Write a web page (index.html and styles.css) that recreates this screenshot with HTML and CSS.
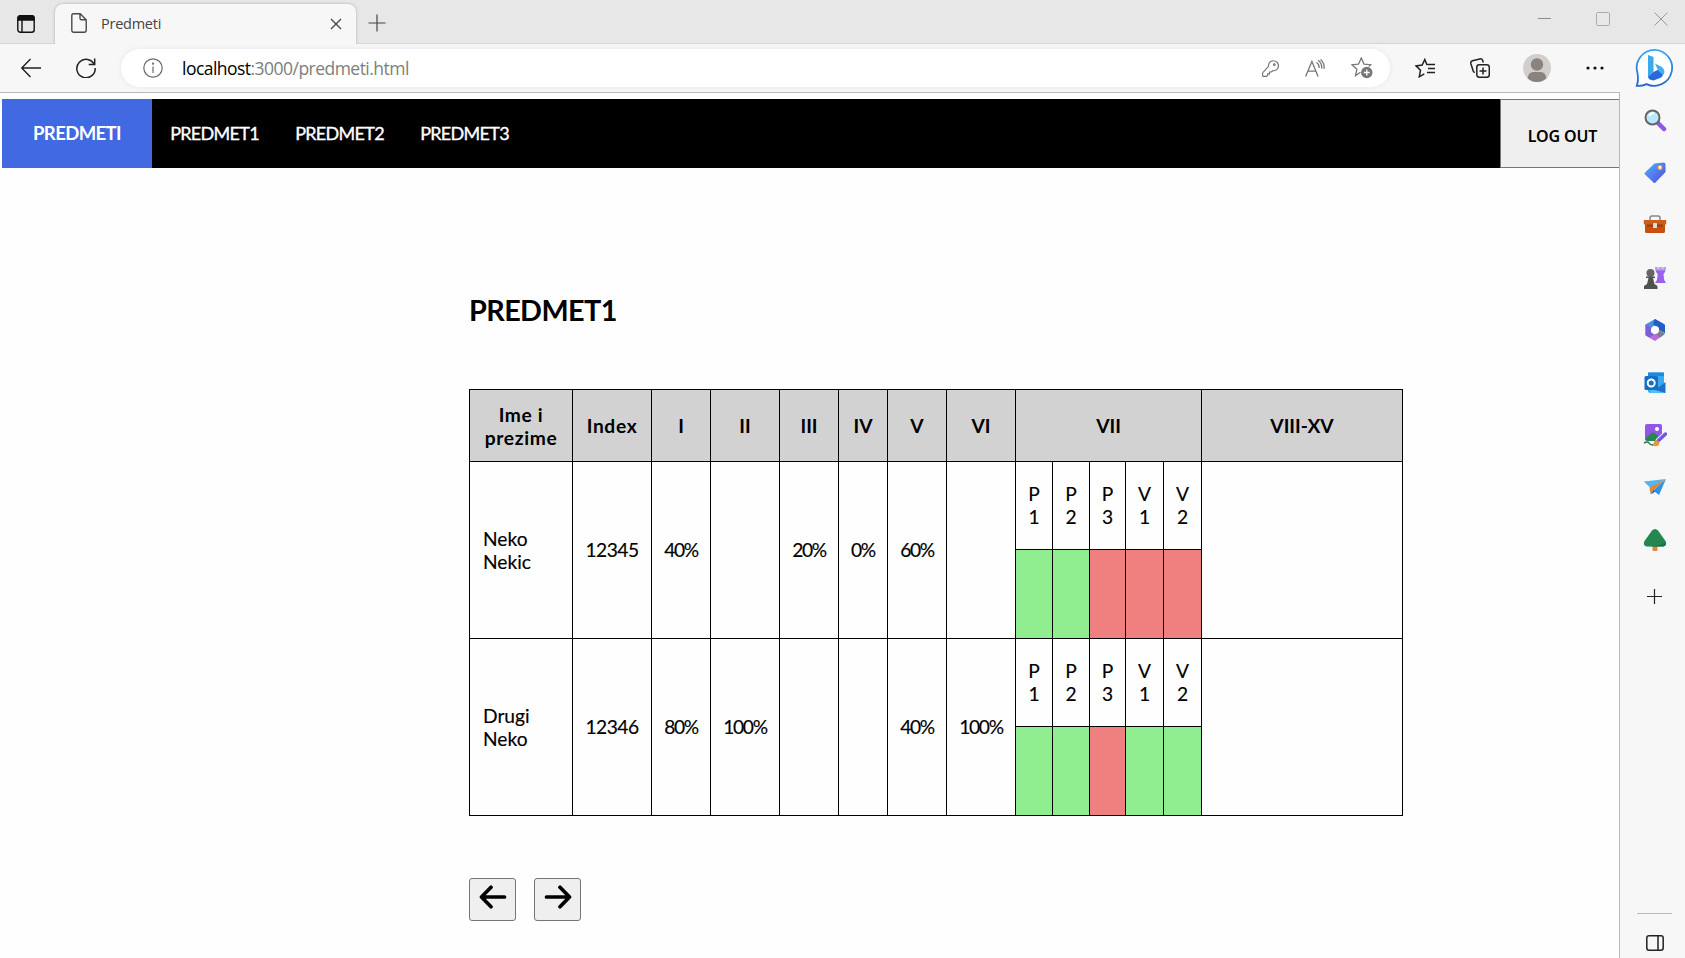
FILE: index.html
```html
<!DOCTYPE html>
<html lang="bs">
<head>
<meta charset="utf-8">
<title>Predmeti</title>
<link rel="stylesheet" href="styles.css">
</head>
<body>
<header class="tabstrip">
  <svg class="workspaces" width="18" height="18" viewBox="0 0 18 18" fill="none" stroke="#111" stroke-width="1.4"><rect x=".8" y=".8" width="16.4" height="16.4" rx="2.5"/><path d="M1 3.2Q1 1 3.2 1h11.6Q17 1 17 3.2V5H1z" fill="#111"/><path d="M5 5v12"/></svg>
  <div class="tab">
    <svg width="16" height="20" viewBox="0 0 16 20" fill="none" stroke="#4a4a4a" stroke-width="1.4"><path d="M2.5.8h6.7l6 6v10.5q0 1.9-1.9 1.9H2.7Q.8 19.200.8 17.300V2.700Q.8.8 2.500.8zM9 .8v4.400q0 1.600 1.600 1.600H15"/></svg>
    <span class="tab-title">Predmeti</span>
    <svg class="tab-close" width="12" height="12" viewBox="0 0 12 12" stroke="#444" stroke-width="1.3"><path d="M1 1l10 10M11 1L1 11"/></svg>
  </div>
  <svg class="new-tab" width="18" height="18" viewBox="0 0 18 18" stroke="#444" stroke-width="1.2"><path d="M9 .5v17M.5 9h17"/></svg>
  <div class="window-buttons">
    <svg width="14" height="14" viewBox="0 0 14 14"><path d="M0 6.500h13" stroke="#958b84"/></svg>
    <svg width="14" height="14" viewBox="0 0 14 14"><rect x=".5" y=".5" width="13" height="13" rx="1" fill="none" stroke="#aaa"/></svg>
    <svg width="14" height="14" viewBox="0 0 14 14"><path d="M.5.5l13 13M13.500.5l-13 13" stroke="#999"/></svg>
  </div>
</header>
<div class="window">
  <div class="left">
    <div class="toolbar">
      <svg class="back" width="20" height="20" viewBox="0 0 20 20" fill="none" stroke="#222" stroke-width="1.4"><path d="M20 10H1M9.500 1L.8 10l8.700 9"/></svg>
      <svg class="reload" width="20" height="20" viewBox="0 0 20 20" fill="none" stroke="#222" stroke-width="1.5"><path d="M18.500 7A9.200 9.200 0 1 0 19.200 10M18.700.5V6.500h-6"/></svg>
      <div class="address">
        <svg width="20" height="20" viewBox="0 0 20 20" fill="none" stroke="#6b6b6b" stroke-width="1.2"><circle cx="10" cy="10" r="9.200"/><path d="M10 8.500V15" /><circle cx="10" cy="5.700" r=".5" fill="#6b6b6b"/></svg>
        <span class="url"><b>localhost</b>:3000/predmeti.html</span>
        <div class="address-icons">
          <svg width="17" height="17" viewBox="0 0 17 17" fill="none" stroke="#777" stroke-width="1.200"><path d="M6.500 6.300A5 5 0 1 1 10.800 10.700L9.300 12H7.500v1.800H5.700v1.500L4.500 16.400H1.200Q.6 16.400.6 15.500V13.300Q.6 12.700 1 12.300z"/><circle cx="12.300" cy="4.700" r=".8"/></svg>
          <svg width="20" height="18" viewBox="0 0 20 18" fill="none" stroke="#777" stroke-width="1.300"><path d="M.6 17.500L6.900 2.500l6.200 15M3 12.200h7.900M11.500 3.500q2.800 1.800 2.600 5.500M13 1.300q4.300 2.900 3.600 8.300M15.500.5q4.300 3.700 3.500 9.300"/></svg>
          <svg width="22" height="22" viewBox="0 0 22 22" fill="none" stroke="#777" stroke-width="1.300"><path d="M9.500 15.200L4.500 18.500 5.900 12.200 1 7.700l6.500-.6L10.300 1l2.700 6.100 6.700.6-1.900 1.900"/><circle cx="15.800" cy="15.500" r="5.700" fill="#777" stroke="none"/><path d="M15.800 12.500v6M12.800 15.500h6" stroke="#fff"/></svg>
        </div>
      </div>
      <div class="tools">
        <svg width="20" height="20" viewBox="0 0 20 20" fill="none" stroke="#222" stroke-width="1.500"><path d="M12 7L9.800 1.500 7.200 7.100 1 7.900l4.500 4.300L4.300 18.800l5-2.900M12.500 6.500h7.500M13 10.500h7M12 14.500h8"/></svg>
        <svg width="20" height="20" viewBox="0 0 20 20" fill="none" stroke="#222" stroke-width="1.500"><rect x="6.800" y="6.800" width="12.500" height="12.500" rx="2.500"/><path d="M13 9.500v7M9.500 13h7M4.800 14.500Q3.600 14.200 3.200 13L.9 5.700Q.3 3.500 2.500 2.800L9.700.9Q12 .5 12.700 2.600L13.300 4.500"/></svg>
        <svg width="28" height="28" viewBox="0 0 28 28"><circle cx="14" cy="14" r="14" fill="#d1cfcd"/><circle cx="14" cy="10.500" r="6.200" fill="#8b827e"/><path d="M4.500 24.300Q6 18 10 18h8q4 0 5.500 6.300a14 14 0 0 1-19 0z" fill="#8b827e"/></svg>
        <svg width="18" height="4" viewBox="0 0 18 4" fill="#111"><circle cx="2" cy="2" r="1.600"/><circle cx="9" cy="2" r="1.600"/><circle cx="16" cy="2" r="1.600"/></svg>
      </div>
    </div>
    <div class="page">
      <nav class="menu">
        <a class="active">PREDMETI</a><a>PREDMET1</a><a>PREDMET2</a><a>PREDMET3</a>
        <button class="logout">LOG OUT</button>
      </nav>
      <main class="content">
        <h1>PREDMET1</h1>
        <div class="grid">
          <div class="h name">Ime i<br>prezime</div><div class="h name">Index</div><div class="h">I</div><div class="h">II</div><div class="h">III</div><div class="h">IV</div><div class="h">V</div><div class="h">VI</div><div class="h week">VII</div><div class="h">VIII-XV</div>

          <div class="student tall">Neko<br>Nekic</div><div class="tall index">12345</div><div class="tall score">40%</div><div class="tall"></div><div class="tall score">20%</div><div class="tall score">0%</div><div class="tall score">60%</div><div class="tall"></div>
          <div>P<br>1</div><div>P<br>2</div><div>P<br>3</div><div>V<br>1</div><div>V<br>2</div><div class="tall"></div>
          <div class="yes"></div><div class="yes"></div><div class="no"></div><div class="no"></div><div class="no"></div>

          <div class="student tall">Drugi<br>Neko</div><div class="tall index">12346</div><div class="tall score">80%</div><div class="tall score">100%</div><div class="tall"></div><div class="tall"></div><div class="tall score">40%</div><div class="tall score">100%</div>
          <div>P<br>1</div><div>P<br>2</div><div>P<br>3</div><div>V<br>1</div><div>V<br>2</div><div class="tall"></div>
          <div class="yes"></div><div class="yes"></div><div class="no"></div><div class="yes"></div><div class="yes"></div>
        </div>
        <div class="pager">
          <button><svg width="28" height="24" viewBox="0 0 28 24" fill="none" stroke="#000" stroke-width="3.700" stroke-linecap="round" stroke-linejoin="round"><path d="M25.500 12H2.500M12 2.300L2.500 12l9.500 9.700"/></svg></button>
          <button><svg width="28" height="24" viewBox="0 0 28 24" fill="none" stroke="#000" stroke-width="3.700" stroke-linecap="round" stroke-linejoin="round"><path d="M2.500 12h23M16 2.300l9.500 9.700-9.500 9.700"/></svg></button>
        </div>
      </main>
    </div>
  </div>
  <aside class="sidebar">
    <svg class="bing" width="40" height="40" viewBox="0 0 40 40"><defs><linearGradient id="ring" x1="0" y1="0" x2="0" y2="1"><stop offset="0" stop-color="#35a5ee"/><stop offset="1" stop-color="#2663d8"/></linearGradient></defs><path d="M20 1.800a18 18 0 1 1-8.500 34.300Q6 38.500 1.800 37.800 3.700 33 2.500 25A18 18 0 0 1 20 1.800z" fill="#fff" stroke="url(#ring)" stroke-width="1.800"/><path d="M13 7l5.500 2v15L13 28.500z" fill="#39a9f0"/><path d="M13 28.500l5.500-4.500 5-2.500 5 0Q29 29 25 30l-6.500 2.500Q13 32 13 28.500z" fill="#2868dc"/><path d="M20 15.500l6 3q4 2.500 3.300 6.500L28 27l-5-4.500z" fill="#42b0ec"/></svg>
    <div class="apps">
      <svg viewBox="0 0 24 24"><path d="M15 15l6 6" stroke="#8f55e8" stroke-width="4.500" stroke-linecap="round"/><circle cx="9.500" cy="9.500" r="7" fill="#b9e7fb" stroke="#666" stroke-width="2"/><path d="M6 8q2-3 5-3" stroke="#fff" stroke-width="2" fill="none"/></svg>
      <svg viewBox="0 0 24 24"><defs><linearGradient id="tag" x1="0" y1="0" x2="1" y2="1"><stop offset="0" stop-color="#4eb5ff"/><stop offset="1" stop-color="#5347dc"/></linearGradient></defs><path d="M11.500 2.500L20.500 1.500Q22.500 1.500 22.500 3.500V11L12.500 21.500q-1 1-2 0L2 13.500q-1-1 0-2z" fill="url(#tag)"/><circle cx="17" cy="6.500" r="2" fill="#fff" stroke="#f0a030" stroke-width="1.200"/></svg>
      <svg viewBox="0 0 24 24"><path d="M7 8V5q0-2 2-2h6q2 0 2 2v3" stroke="#888" stroke-width="1.500" fill="none"/><rect x="2" y="8" width="20" height="12" rx="1.500" fill="#c7500d"/><path d="M.8 7h22.400v4l-3 2H3.800l-3-2z" fill="#c85f1b"/><path d="M4 11.500h16v2H4z" fill="#9e3a08"/><rect x="10" y="10" width="4" height="5" rx=".7" fill="#ddd"/></svg>
      <svg viewBox="0 0 24 24"><path d="M12 1h2.300v2h2V1h2.500v2h2V1H23l-1 5-1.500 2 .7 6L23 17H12l2-3 .7-6L13 6z" fill="#9861ee"/><path d="M12 1h11l-.7 3.500h-9.600z" fill="#c4b5ed" opacity=".7"/><circle cx="7.500" cy="7" r="4" fill="#666"/><path d="M3 10.500h9V12h-2l1.500 6 3 2v3H1v-3l3-2L5.500 12H3z" fill="#4f5350"/></svg>
      <svg viewBox="0 0 24 24"><path d="M12 1l9 5-5 5-4-3-4 3v3l-5.500 3V6.500z" fill="#4a91df"/><path d="M12 1l10 5.800v8.500L16 12V9.500L10 6z" fill="#245dc9"/><path d="M2.500 6.500L8 9.500V14l4 2-5 4-4.500-2.500z" fill="#7b61d8"/><path d="M21.500 16.500L12 23l-6-3.500 6-3.500 4-4z" fill="#b96de0"/><path d="M16 12l6 3.500-5 4-4-3.500z" fill="#77818c"/><circle cx="12" cy="12" r="4" fill="#fff"/></svg>
      <svg viewBox="0 0 24 24"><rect x="5" y="1.500" width="16" height="20" rx="1.500" fill="#38a9f3"/><path d="M5 1.500h16V5H5z" fill="#2189da"/><path d="M22.500 11v11H6l10-6z" fill="#1d72c8"/><path d="M9 18l13.500 4H6z" fill="#50bdf8"/><rect x="1.500" y="5" width="13.500" height="14" rx="1.500" fill="#126fc6"/><circle cx="8.200" cy="12" r="3.500" fill="none" stroke="#fff" stroke-width="2"/></svg>
      <svg viewBox="0 0 24 24"><path d="M4 1h13q2 0 2 2v9l-6 6H4q-2 0-2-2V3q0-2 2-2z" fill="#9257e8"/><path d="M2 16l6-6q2-1 4 0l4 4-4 4H4z" fill="#2b8550"/><circle cx="14" cy="6" r="2" fill="#fff"/><path d="M23 10.500L15.500 17.500" stroke="#f7f7f7" stroke-width="5.500" stroke-linecap="round"/><path d="M22.500 11L15 18" stroke="#7258df" stroke-width="3.500" stroke-linecap="round"/><path d="M10.500 20.500q1-4 4-3l1.500 1.500q1 3-2 4-2 .5-5-.5z" fill="#e7963b"/><path d="M1 20q4-2 5 0t4 2" stroke="#267443" stroke-width="1.500" fill="none"/></svg>
      <svg viewBox="0 0 24 24"><path d="M.8 5.500L23 3 7.500 12z" fill="#56b5ef"/><path d="M23 3L16 19l-6-4.500z" fill="#3193e5"/><path d="M23 3L6.500 11.500 7.500 18l3.500-4z" fill="#d88a38"/><path d="M11 14l-3.500 4 2.500-.8 2-2z" fill="#2b51bb"/></svg>
      <svg viewBox="0 0 24 24"><rect x="9.500" y="17" width="5" height="6" rx="1" fill="#d98b42"/><path d="M9 2.500q3-3 6 0l7.500 10.500q2 5-2 5.500h-17q-4-.5-2-5.500z" fill="#26864f"/><path d="M22.500 14.500q.8 3.500-2.500 4h-15.500Q14 18.500 22.500 14.500z" fill="#187445"/></svg>
    </div>
    <svg class="add" width="15" height="15" viewBox="0 0 15 15" stroke="#222" stroke-width="1.200"><path d="M7.500 0v15M0 7.500h15"/></svg>
    <div class="side-end"><svg width="18" height="16" viewBox="0 0 18 16" fill="none" stroke="#222" stroke-width="1.500"><rect x=".8" y=".8" width="16.400" height="14.400" rx="2.200"/><path d="M12 1v14"/></svg></div>
  </aside>
</div>
</body>
</html>
```

FILE: styles.css
```css
* { box-sizing: border-box; }
body { margin: 0; width: 1685px; height: 958px; overflow: hidden; display: flex; flex-direction: column; background: #f7f7f7; font-family: Lato, sans-serif; color: #000; }
svg { display: block; flex: none; }
button { font: inherit; color: #000; background: #efefef; border: 1px solid #767676; padding: 0; }

.tabstrip { height: 44px; flex: none; display: flex; background: #e7e7e7; border-bottom: 1px solid #d6d6d6; }
.workspaces { margin: 15px 19px 0 17px; }
.tab { width: 301px; height: 40px; margin-top: 4px; margin-left: 1px; margin-bottom: -1px; padding: 0 14px 3px 16px; display: flex; align-items: center; background: #f7f7f7; border-radius: 8px 8px 0 0; box-shadow: 0 0 3px #aaa; clip-path: inset(-4px -4px 0 -4px); }
.tab-title { margin: 1px 0 0 14px; font: 14.5px "Open Sans", sans-serif; letter-spacing: -.25px; color: #444; }
.tab-close { margin: 3px 0 0 auto; }
.new-tab { margin: 14px 0 0 12px; }
.window-buttons { display: flex; gap: 44px; margin: 12px 17px 0 auto; }

.window { flex: 1; min-height: 0; display: flex; }
.left { width: 1620px; display: flex; flex-direction: column; }
.toolbar { height: 48px; flex: none; display: flex; align-items: center; }
.back { margin-left: 21px; }
.reload { margin: 0 25px 0 35px; }
.address { width: 1269px; height: 38px; padding: 0 17px 0 22px; display: flex; align-items: center; background: #fff; border-radius: 19px; box-shadow: 0 0 5px #e6e6e6; }
.url { margin: -1px 0 0 19px; font: 17.5px "Open Sans", sans-serif; letter-spacing: -.53px; color: #7c807c; white-space: nowrap; }
.url b { font-weight: 400; color: #000; }
.address-icons { display: flex; align-items: center; gap: 26px; margin-left: auto; }
.tools { display: flex; align-items: center; margin-left: 25px; }
.tools svg:nth-child(2) { margin-left: 35px; }
.tools svg:nth-child(3) { margin-left: 33px; }
.tools svg:nth-child(4) { margin-left: 35px; }

.page { flex: 1; min-height: 0; background: #fefefe; border-top: 1px solid #b9b9b9; border-right: 1px solid #b9b9b9; padding: 6px 0 0 2px; }
.menu { height: 69px; display: flex; background: #000; color: #fff; font-size: 18px; letter-spacing: -.7px; line-height: 69px; }
.menu a { width: 125px; text-align: center; white-space: nowrap; -webkit-text-stroke: .35px #fff; }
.menu .active { width: 150px; background: #4169e1; font-size: 18.500px; font-weight: 700; letter-spacing: -.6px; -webkit-text-stroke: 0; }
.logout { width: 119px; margin-left: auto; padding: 5px 0 0 5px; border-right: 0; font: 600 16px "Noto Sans", sans-serif; letter-spacing: -.1px; white-space: nowrap; }

.content { padding: 121px 0 0 467px; }
h1 { margin: 0; height: 100px; padding-top: 4px; font-size: 28.800px; line-height: 35px; font-weight: 700; letter-spacing: -.6px; }
.grid { width: 934px; display: grid; grid-template-columns: 102px 78px 58px 68px 58px 48px 58px 68px 36px 36px 35px 37px 37px 200px; grid-template-rows: 71px 87px 88px 87px 88px; gap: 1px; padding: 1px; background: #000; font-size: 19.200px; line-height: 23px; -webkit-text-stroke: .15px #000; }
.grid > div { display: flex; align-items: center; justify-content: center; text-align: center; background: #fefefe; padding-bottom: 2px; }
.grid > .h { background: #d2d2d2; font-weight: 700; padding-bottom: 0; -webkit-text-stroke: 0; }
.grid > .name { letter-spacing: .65px; }
.grid > .index { letter-spacing: -.5px; }
.grid > .score { letter-spacing: -1.3px; }
.grid > .week { grid-column: span 5; }
.grid > .tall { grid-row: span 2; }
.grid > .student { justify-content: flex-start; text-align: left; padding: 0 0 0 13px; }
.grid > .yes { background: #90ee90; }
.grid > .no { background: #f08080; }
.pager { display: flex; gap: 18px; margin-top: 62px; }
.pager button { width: 47px; height: 43px; border-radius: 3px; display: flex; justify-content: center; padding-top: 6px; }

.sidebar { width: 65px; display: flex; flex-direction: column; align-items: center; padding-left: 4px; }
.bing { margin-top: 4px; }
.apps { display: flex; flex-direction: column; gap: 28.500px; margin-top: 20px; }
.apps svg { width: 24px; height: 24px; }
.add { margin-top: 37px; }
.side-end { width: 35px; margin-top: auto; padding: 21px 0 7px; border-top: 1px solid #bbb; display: flex; justify-content: center; }
```
